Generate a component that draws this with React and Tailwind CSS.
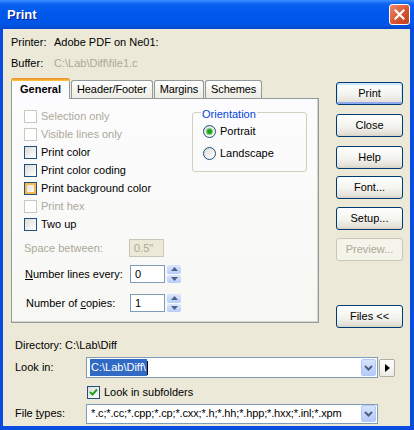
import React from 'react';
import clsx from 'clsx';

const font = "font-['Liberation_Sans',Arial,sans-serif]";

function Box({ state = 'normal', checked }) {
  return (
    <span
      className={clsx(
        'relative flex h-[13px] w-[13px] shrink-0 items-center justify-center border',
        state === 'disabled'
          ? 'border-[#CAC8BB] bg-white'
          : 'border-[#1C5180] bg-[linear-gradient(135deg,#DCDCD7,#FFFFFF)]',
        state === 'hover' && 'shadow-[inset_0_0_0_2px_#F9B94A]'
      )}
    >
      {checked && (
        <svg width="9" height="9" viewBox="0 0 9 9">
          <path d="M1 4 L3.5 6.5 L8 1.5" fill="none" stroke="#21A121" strokeWidth="2" />
        </svg>
      )}
    </span>
  );
}

function Check({ label, state }) {
  return (
    <div className="flex h-[18px] items-center gap-[4px]">
      <Box state={state} />
      <span className={state === 'disabled' ? 'text-[#ACA899]' : 'text-black'}>{label}</span>
    </div>
  );
}

function Radio({ label, checked }) {
  return (
    <div className="flex h-[16px] items-center gap-[4px]">
      <span className="flex h-[13px] w-[13px] items-center justify-center rounded-full border border-[#1C5180] bg-[linear-gradient(135deg,#DCDCD7,#FFFFFF)]">
        {checked && <span className="h-[5px] w-[5px] rounded-full bg-[#21A121] shadow-[0_0_0_1px_#7ED07E]" />}
      </span>
      <span>{label}</span>
    </div>
  );
}

function Btn({ children, def, disabled, className }) {
  return (
    <button
      type="button"
      className={clsx(
        'flex h-[23px] w-[67px] items-center justify-center rounded-[3px] border text-[11px]',
        disabled
          ? 'border-[#C9C7BA] bg-[#F5F4EA] text-[#ACA899]'
          : 'border-[#003C74] bg-[linear-gradient(to_bottom,#FFFFFF,#F3F3EF_55%,#E3E0D6_90%,#D6D0C5)] text-black',
        def && 'shadow-[inset_0_1px_0_1px_#CEE7FF,inset_0_-1px_0_1px_#8FA9F0]',
        className
      )}
    >
      {children}
    </button>
  );
}

function Chevron({ color = '#4D6185' }) {
  return (
    <svg width="9" height="6" viewBox="0 0 9 6">
      <path d="M1 1 L4.5 4.5 L8 1" fill="none" stroke={color} strokeWidth="2" />
    </svg>
  );
}

function DropBtn() {
  return (
    <span className="flex h-[17px] w-[15px] items-center justify-center rounded-[2px] border border-[#B4C8F6] bg-[linear-gradient(to_bottom,#D8E4FD,#B4CAF8)]">
      <Chevron />
    </span>
  );
}

function Spinner() {
  return (
    <div className="ml-[2px] flex h-[18px] w-[14px] flex-col gap-px">
      <span className="flex flex-1 items-center justify-center rounded-[2px] bg-[linear-gradient(to_bottom,#DCE6FD,#B6CCF8)]">
        <svg width="7" height="4" viewBox="0 0 7 4"><path d="M0 4 L3.5 0 L7 4 Z" fill="#4D6185" /></svg>
      </span>
      <span className="flex flex-1 items-center justify-center rounded-[2px] bg-[linear-gradient(to_bottom,#DCE6FD,#B6CCF8)]">
        <svg width="7" height="4" viewBox="0 0 7 4"><path d="M0 0 L3.5 4 L7 0 Z" fill="#4D6185" /></svg>
      </span>
    </div>
  );
}

function Tab({ children, active }) {
  return active ? (
    <div className="relative z-10 -mb-px flex h-[21px] w-[59px] items-center justify-center rounded-t-[3px] border-x border-[#919B9C] bg-[#FCFCFE] font-bold">
      <span className="absolute inset-x-[-1px] top-0 h-[3px] rounded-t-[3px] bg-[linear-gradient(to_bottom,#E68B2C,#FFC73C)]" />
      <span className="pt-[2px]">{children}</span>
    </div>
  ) : (
    <div className="ml-[1px] flex h-[18px] items-center rounded-t-[3px] border-x border-t border-[#919B9C] bg-[linear-gradient(to_bottom,#FFFFFF,#F3F2EC_60%,#ECEBE5)] px-[5px] tracking-[-0.1px]">
      {children}
    </div>
  );
}

export default function App() {
  return (
    <div className={clsx('flex h-[430px] w-[414px] flex-col overflow-hidden text-[11px] text-black', font)}>
      {/* title bar */}
      <div className="flex h-[29px] shrink-0 items-center justify-between bg-[linear-gradient(to_bottom,#3D8FFF_0%,#0A61F0_14%,#0058EE_45%,#0055E5_85%,#0047CC_100%)] pl-[7px] pr-[4px]">
        <span className="text-[13px] font-bold text-white [text-shadow:1px_1px_0_#0A1E8C]">Print</span>
        <span className="flex h-[21px] w-[21px] items-center justify-center rounded-[3px] border border-white bg-[linear-gradient(135deg,#F08A68,#D6502E_60%,#C23F1E)]">
          <svg width="11" height="11" viewBox="0 0 11 11">
            <path d="M1.5 1.5 L9.5 9.5 M9.5 1.5 L1.5 9.5" stroke="white" strokeWidth="2.2" strokeLinecap="square" />
          </svg>
        </span>
      </div>

      {/* body */}
      <div className="flex flex-1 flex-col border-b-[4px] border-l-[3px] border-r-[4px] border-[#0B4CE0] bg-[#ECE9D8]">
        <div className="pl-[8px] pt-[3px]">
          <div className="flex h-[21px] items-center">
            <span className="w-[43px]">Printer:</span>
            <span>Adobe PDF on Ne01:</span>
          </div>
          <div className="flex h-[21px] items-center">
            <span className="w-[43px]">Buffer:</span>
            <span className="text-[#ACA899]">C:\Lab\Diff\file1.c</span>
          </div>
        </div>

        <div className="mt-[4px] flex pl-[8px]">
          {/* tabs + panel */}
          <div className="flex w-[308px] flex-col">
            <div className="flex h-[20px] items-end">
              <Tab active>General</Tab>
              <Tab>Header/Footer</Tab>
              <Tab>Margins</Tab>
              <Tab>Schemes</Tab>
            </div>
            <div className="h-[225px] border border-[#919B9C] bg-[linear-gradient(to_bottom,#FCFCFE,#F7F7F3)] pl-[12px] pt-[8px] shadow-[inset_-1px_-1px_0_#D6D3C7]">
              <div className="flex">
                <div className="w-[168px]">
                  <Check label="Selection only" state="disabled" />
                  <Check label="Visible lines only" state="disabled" />
                  <Check label="Print color" />
                  <Check label="Print color coding" />
                  <Check label="Print background color" state="hover" />
                  <Check label="Print hex" state="disabled" />
                  <Check label="Two up" />
                </div>
                <div className="relative mt-[5px] h-[60px] w-[115px] rounded-[3px] border border-[#D0D0BF] pl-[10px] pt-[10px]">
                  <span className="absolute left-[8px] top-[-7px] bg-[#FCFCFE] px-px text-[#0046D5]">Orientation</span>
                  <Radio label="Portrait" checked />
                  <div className="mt-[6px]">
                    <Radio label="Landscape" />
                  </div>
                </div>
              </div>

              <div className="mt-[6px] flex h-[18px] items-center">
                <span className="w-[105px] text-[#ACA899]">Space between:</span>
                <span className="flex h-[18px] w-[35px] items-center border border-[#C9C7BA] bg-[#ECE9D8] pl-[4px] text-[#ACA899]">0.5"</span>
              </div>
              <div className="mt-[8px] flex h-[18px] items-center">
                <span className="w-[106px] pl-px"><span className="underline">N</span>umber lines every:</span>
                <span className="flex h-[18px] w-[35px] items-center border border-[#7F9DB9] bg-white pl-[4px]">0</span>
                <Spinner />
              </div>
              <div className="mt-[11px] flex h-[18px] items-center">
                <span className="w-[106px] pl-[2px]">Number of <span className="underline">c</span>opies:</span>
                <span className="flex h-[18px] w-[35px] items-center border border-[#7F9DB9] bg-white pl-[4px]">1</span>
                <Spinner />
              </div>
            </div>
          </div>

          {/* buttons */}
          <div className="ml-[17px] flex flex-col pt-[4px]">
            <Btn def>Print</Btn>
            <Btn className="mt-[9px]">Close</Btn>
            <Btn className="mt-[9px]">Help</Btn>
            <Btn className="mt-[7px]">Font...</Btn>
            <Btn className="mt-[8px]">Setup...</Btn>
            <Btn className="mt-[8px]" disabled>Preview...</Btn>
            <Btn className="mt-[44px]">Files &lt;&lt;</Btn>
          </div>
        </div>

        {/* files section */}
        <div className="pl-[12px]">
          <div className="mt-[10px] flex h-[14px] items-center">Directory: C:\Lab\Diff</div>
          <div className="mt-[5px] flex h-[21px] items-center">
            <span className="w-[71px]">Look in:</span>
            <div className="flex h-[21px] w-[292px] items-center justify-between border border-[#7F9DB9] bg-white pl-[3px] pr-px">
              <span className="flex items-center">
                <span className="bg-[#316AC5] px-px text-white">C:\Lab\Diff\</span>
                <span className="h-[14px] w-px bg-black" />
              </span>
              <DropBtn />
            </div>
            <span className="ml-px flex h-[18px] w-[16px] items-center justify-center rounded-[2px] border border-[#B0AEA2] bg-[linear-gradient(to_bottom,#FFFFFF,#ECEBE5)]">
              <svg width="5" height="8" viewBox="0 0 5 8"><path d="M0 0 L5 4 L0 8 Z" fill="black" /></svg>
            </span>
          </div>
          <div className="ml-[72px] mt-[8px] flex h-[13px] items-center gap-[4px]">
            <Box checked />
            <span>Look in subfolders</span>
          </div>
          <div className="mt-[4px] flex h-[21px] items-center">
            <span className="w-[71px]">File <span className="underline">t</span>ypes:</span>
            <div className="flex h-[20px] w-[292px] items-center justify-between border border-[#7F9DB9] bg-white pl-[4px] pr-px">
              <span className="tracking-[-0.15px]">*.c;*.cc;*.cpp;*.cp;*.cxx;*.h;*.hh;*.hpp;*.hxx;*.inl;*.xpm</span>
              <DropBtn />
            </div>
          </div>
        </div>
      </div>
    </div>
  );
}
